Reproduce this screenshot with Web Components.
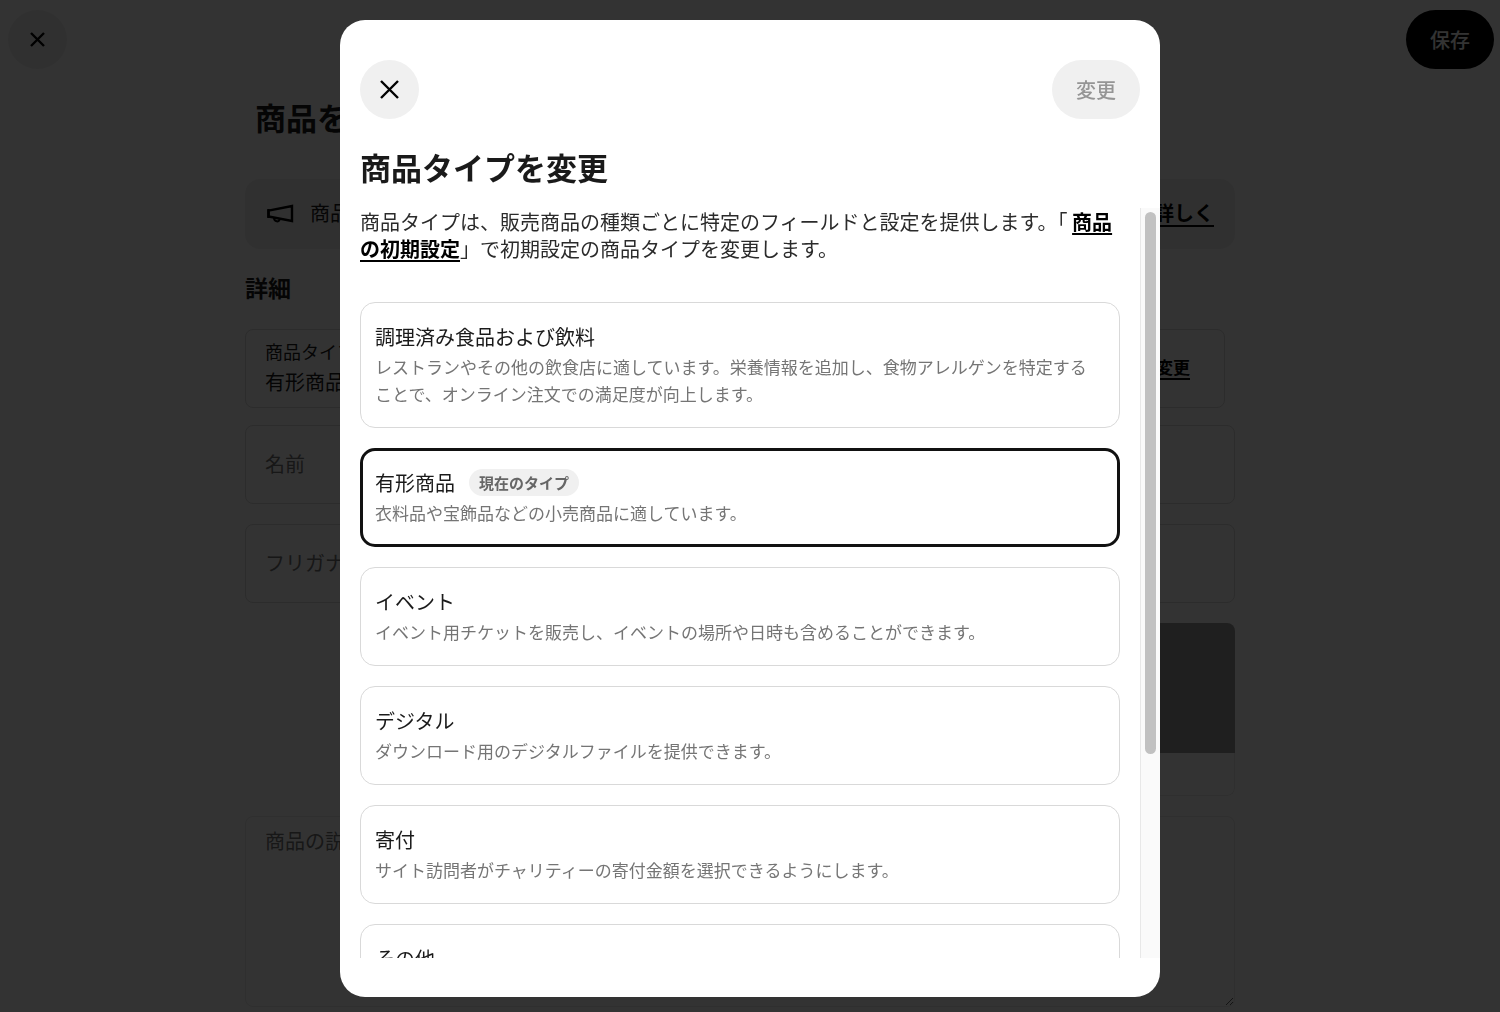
<!DOCTYPE html>
<html lang="ja">
<head>
<meta charset="UTF-8">
<meta name="viewport" content="width=device-width, initial-scale=1.0">
<title>商品タイプを変更</title>
<style>
    html, body { height: 100%; }
    body { margin: 0; overflow: hidden; background: #fff; color: #1a1a1a; font-family: "Noto Sans CJK JP", sans-serif; font-size: 20px; }
</style>
</head>
<body>

<item-editor>
    <pill-button slot="close" kind="icon" label="閉じる" icon-size="15"></pill-button>
    <pill-button slot="save" kind="primary">保存</pill-button>
    <notice-banner></notice-banner>
    <h2>詳細</h2>
    <type-summary label="商品タイプ" value="有形商品"></type-summary>
    <text-field label="名前"></text-field>
    <text-field label="フリガナ"></text-field>
    <image-tile></image-tile>
    <text-field label="商品の説明" multiline></text-field>
</item-editor>

<type-dialog heading="商品タイプを変更">
    <pill-button slot="close" kind="icon" label="閉じる" icon-size="19"></pill-button>
    <pill-button slot="action" disabled>変更</pill-button>
    <type-option heading="調理済み食品および飲料">レストランやその他の飲食店に適しています。栄養情報を追加し、食物アレルゲンを特定することで、オンライン注文での満足度が向上します。</type-option>
    <type-option heading="有形商品" badge="現在のタイプ" selected>衣料品や宝飾品などの小売商品に適しています。</type-option>
    <type-option heading="イベント">イベント用チケットを販売し、イベントの場所や日時も含めることができます。</type-option>
    <type-option heading="デジタル">ダウンロード用のデジタルファイルを提供できます。</type-option>
    <type-option heading="寄付">サイト訪問者がチャリティーの寄付金額を選択できるようにします。</type-option>
    <type-option heading="その他">上記以外の商品に適しています。</type-option>
</type-dialog>

<script>
    // --- BUTTONS ---
    class PillButton extends HTMLElement {
        connectedCallback() {
            const kind = this.getAttribute('kind') || 'secondary';
            const size = this.getAttribute('icon-size');
            const disabled = this.hasAttribute('disabled') ? 'disabled' : '';
            const label = this.getAttribute('label');
            const content = kind === 'icon'
                ? `<svg width="${size}" height="${size}" viewBox="0 0 ${size} ${size}" fill="none" stroke="currentColor" stroke-width="2.4" aria-hidden="true">
                       <path d="M1 1L${size - 1} ${size - 1}M${size - 1} 1L1 ${size - 1}"/>
                   </svg>`
                : '<slot></slot>';
            this.attachShadow({ mode: 'open' }).innerHTML = `
                <style>
                    :host { display: block; }
                    button { display: flex; align-items: center; justify-content: center; height: 59px; padding: 0 24px; border: 0; border-radius: 30px; background: #f0f0f0; color: #1a1a1a; font: inherit; font-weight: 500; cursor: pointer; }
                    button.icon { width: 59px; padding: 0; color: #000; }
                    button.primary { background: #000; color: #fff; }
                    button:disabled { color: #959595; cursor: default; }
                    svg { display: block; }
                </style>
                <button type="button" class="${kind}" ${label ? `aria-label="${label}"` : ''} ${disabled}>${content}</button>
            `;
        }
    }

    // --- EDITOR PAGE ---
    class ItemEditor extends HTMLElement {
        connectedCallback() {
            this.attachShadow({ mode: 'open' }).innerHTML = `
                <style>
                    :host { display: grid; grid-template-columns: 1fr 20px; height: 100%; overflow: hidden; }
                    header { display: flex; justify-content: space-between; grid-column: 1 / -1; padding: 10px 6px 0 8px; }
                    main { box-sizing: border-box; width: 100%; max-width: 1010px; margin: 0 auto; padding: 24px 10px 0; }
                    h1 { margin: 0 0 38px 10px; font-size: 31px; line-height: 48px; font-weight: 700; }
                    .fields { display: flex; flex-direction: column; }
                    ::slotted(h2) { margin: 20px 0 24px; font-size: 23px; line-height: 36px; }
                </style>
                <header><slot name="close"></slot><slot name="save"></slot></header>
                <main>
                    <h1>商品を編集</h1>
                    <div class="fields"><slot></slot></div>
                </main>
            `;
        }
    }

    class NoticeBanner extends HTMLElement {
        connectedCallback() {
            this.attachShadow({ mode: 'open' }).innerHTML = `
                <style>
                    :host { display: flex; align-items: center; gap: 16px; height: 70px; padding: 0 21px 0 22px; border-radius: 15px; background: #f0f0f0; }
                    p { flex: 1; margin: 0; }
                    p, a { line-height: 28px; padding-bottom: 2px; }
                    a { color: #000; font-weight: 700; text-decoration: underline 2px; text-underline-offset: 4px; }
                </style>
                <svg width="27" height="20" viewBox="0 0 27 20" fill="none" stroke="#000" stroke-width="2.4" aria-hidden="true">
                    <path d="M1.5 6.6L25 2V17L1.5 12.4Z"/>
                    <path d="M1.5 5V14"/>
                    <path d="M7 13.6C7 18.2 12.4 18.6 12.8 14.8" stroke-width="2"/>
                </svg>
                <p>商品</p>
                <a href="#">詳しく</a>
            `;
        }
    }

    class TypeSummary extends HTMLElement {
        connectedCallback() {
            this.attachShadow({ mode: 'open' }).innerHTML = `
                <style>
                    :host { display: flex; align-items: center; justify-content: space-between; box-sizing: border-box; height: 79px; margin: 0 10px 17px 0; padding: 0 34px 4px 19px; border: 1px solid #d9d9d9; border-radius: 8px; }
                    .label { font-size: 18px; line-height: 30px; }
                    .value { line-height: 31px; }
                    a { color: #000; font-size: 17px; font-weight: 700; text-decoration: underline 2px; text-underline-offset: 4px; }
                </style>
                <div>
                    <div class="label">${this.getAttribute('label')}</div>
                    <div class="value">${this.getAttribute('value')}</div>
                </div>
                <a href="#">変更</a>
            `;
        }
    }

    class TextField extends HTMLElement {
        connectedCallback() {
            const multiline = this.hasAttribute('multiline');
            const control = multiline ? '<textarea id="control"></textarea>' : '<input id="control" type="text">';
            this.attachShadow({ mode: 'open' }).innerHTML = `
                <style>
                    :host { display: grid; margin-bottom: 20px; }
                    label, input, textarea { grid-area: 1 / 1; }
                    label { align-self: ${multiline ? 'start' : 'center'}; padding: ${multiline ? '10px 20px' : '0 20px 2px'}; color: #757575; line-height: 30px; pointer-events: none; }
                    input, textarea { box-sizing: border-box; width: 100%; height: 79px; margin: 0; padding: 0 20px; border: 1px solid #d9d9d9; border-radius: 8px; background: transparent; font: inherit; }
                    textarea { height: 191px; padding: 10px 20px; border-color: #e8e8e8; }
                </style>
                <label for="control">${this.getAttribute('label')}</label>
                ${control}
            `;
        }
    }

    class ImageTile extends HTMLElement {
        connectedCallback() {
            this.attachShadow({ mode: 'open' }).innerHTML = `
                <style>
                    :host { display: block; align-self: flex-end; box-sizing: border-box; width: 173px; margin-bottom: 20px; border-radius: 8px; overflow: hidden; }
                    .photo { height: 130px; background: #9b9b9b; }
                    .caption { height: 42px; border: solid #e8e8e8; border-width: 0 1px 1px; border-radius: 0 0 8px 8px; }
                </style>
                <div class="photo"></div>
                <div class="caption"></div>
            `;
        }
    }

    // --- DIALOG ---
    class TypeDialog extends HTMLElement {
        connectedCallback() {
            this.attachShadow({ mode: 'open' }).innerHTML = `
                <style>
                    :host { position: fixed; inset: 0; display: flex; justify-content: center; padding: 20px 20px 15px; background: rgba(0, 0, 0, 0.8); }
                    .dialog { display: flex; flex-direction: column; box-sizing: border-box; width: 100%; max-width: 820px; padding: 40px 0 39px; border-radius: 25px; background: #fff; overflow: hidden; }
                    header { display: flex; justify-content: space-between; padding: 0 20px; }
                    h2 { margin: 25px 20px 18px; font-size: 31px; line-height: 46px; font-weight: 700; }
                    .body { flex: 1; display: flex; min-height: 0; }
                    .scroller { flex: 1; padding: 0 20px; overflow-y: auto; scrollbar-width: none; }
                    p { margin: 0 0 40px; color: #2b2b2b; line-height: 27px; }
                    a { color: #000; font-weight: 700; text-decoration: underline 2px; text-underline-offset: 3px; }
                    .options { display: flex; flex-direction: column; gap: 20px; padding-bottom: 20px; }
                    .track { box-sizing: border-box; width: 20px; padding: 4px; border-left: 1px solid #e8e8e8; background: #fafafa; }
                    .thumb { width: 11px; height: 73%; border-radius: 6px; background: #c1c1c1; }
                </style>
                <div class="dialog" role="dialog" aria-modal="true" aria-labelledby="heading">
                    <header><slot name="close"></slot><slot name="action"></slot></header>
                    <h2 id="heading">${this.getAttribute('heading')}</h2>
                    <div class="body">
                        <div class="scroller">
                            <p>商品タイプは、販売商品の種類ごとに特定のフィールドと設定を提供します。「 <a href="#">商品の初期設定</a>」で初期設定の商品タイプを変更します。</p>
                            <div class="options"><slot></slot></div>
                        </div>
                        <div class="track"><div class="thumb"></div></div>
                    </div>
                </div>
            `;

            const scroller = this.shadowRoot.querySelector('.scroller');
            const thumb = this.shadowRoot.querySelector('.thumb');
            scroller.addEventListener('scroll', () => {
                const free = scroller.clientHeight - 8 - thumb.offsetHeight;
                const range = scroller.scrollHeight - scroller.clientHeight;
                thumb.style.marginTop = `${free * scroller.scrollTop / range}px`;
            });

            this.addEventListener('click', (e) => {
                const option = e.target.closest('type-option');
                if (!option) return;
                this.querySelectorAll('type-option').forEach(item => {
                    item.toggleAttribute('selected', item === option);
                });
            });
        }
    }

    class TypeOption extends HTMLElement {
        connectedCallback() {
            const badge = this.getAttribute('badge');
            this.attachShadow({ mode: 'open' }).innerHTML = `
                <style>
                    :host { display: block; }
                    button { display: block; box-sizing: border-box; width: 100%; padding: 18px 20px 20px 14px; border: 1px solid #d9d9d9; border-radius: 15px; background: #fff; color: #1a1a1a; font: inherit; text-align: left; cursor: pointer; }
                    :host([selected]) button { padding: 16px 18px 18px 12px; border: 3px solid #111; }
                    .heading { display: flex; align-items: center; gap: 14px; margin-bottom: 1px; line-height: 31px; }
                    .badge { padding: 0 10px; border-radius: 14px; background: #f0f0f0; color: #666; font-size: 15px; line-height: 27px; font-weight: 700; }
                    .text { display: block; color: #757575; font-size: 17px; line-height: 27px; }
                </style>
                <button type="button">
                    <span class="heading">${this.getAttribute('heading')}${badge ? `<span class="badge">${badge}</span>` : ''}</span>
                    <span class="text"><slot></slot></span>
                </button>
            `;
        }
    }

    customElements.define('pill-button', PillButton);
    customElements.define('item-editor', ItemEditor);
    customElements.define('notice-banner', NoticeBanner);
    customElements.define('type-summary', TypeSummary);
    customElements.define('text-field', TextField);
    customElements.define('image-tile', ImageTile);
    customElements.define('type-dialog', TypeDialog);
    customElements.define('type-option', TypeOption);
</script>
</body>
</html>
